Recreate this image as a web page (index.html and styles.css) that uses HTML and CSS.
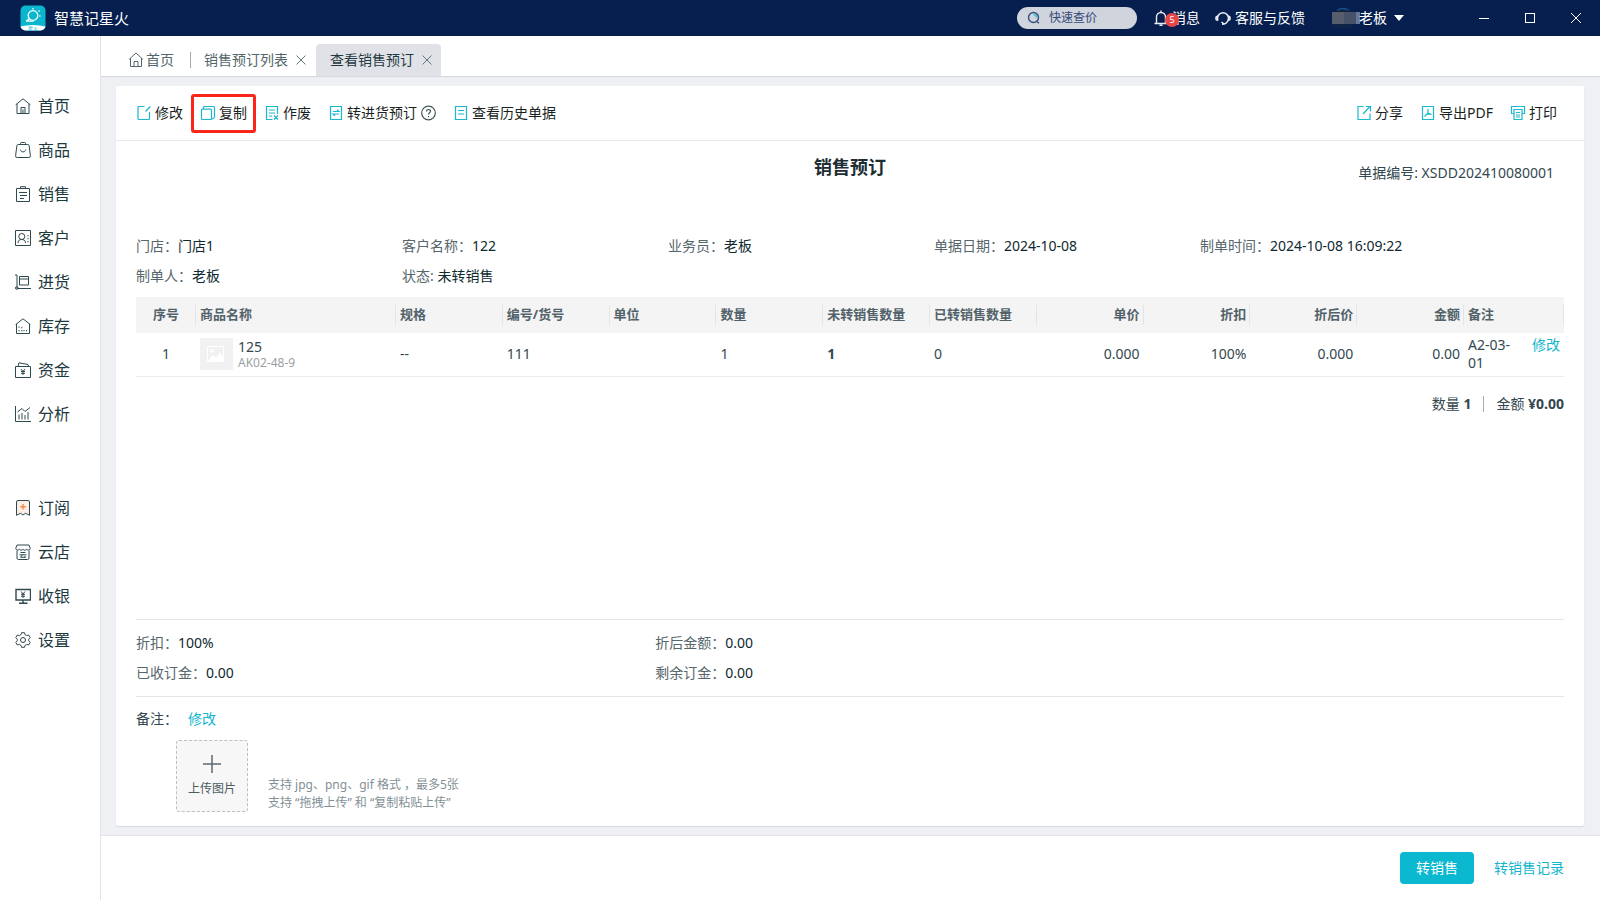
FILE: index.html
```html
<!DOCTYPE html>
<html lang="zh-CN">
<head>
<meta charset="utf-8">
<title>智慧记星火</title>
<link rel="stylesheet" href="styles.css">
</head>
<body>
<header class="topbar">
  <div class="brand">
    <svg class="logo" viewBox="0 0 26 26" width="26" height="26"><defs><clipPath id="lc"><rect x="0.5" y="0.5" width="25" height="25" rx="5"/></clipPath></defs><g clip-path="url(#lc)"><rect width="26" height="26" fill="#0ab6ce"/><path d="M0 21.5Q13 18.500 26 21.500V26H0z" fill="#fff"/></g><circle cx="13" cy="10.500" r="4.800" fill="none" stroke="#fff" stroke-width="1.300"/><path d="M13 3v1.500M19.500 5.500l-1 1M20.500 11h-1.200M9.500 14l-3 1.500M6 16.200h7.500" stroke="#fff" stroke-width="1.300" fill="none"/><text x="13" y="25" text-anchor="middle" class="logo-text">星火</text></svg>
    <span class="brand-name">智慧记星火</span>
  </div>
  <label class="search">
    <svg viewBox="0 0 14 14" width="14" height="14" fill="none" stroke="#33527f" stroke-width="1.400"><circle cx="6.500" cy="6.500" r="5"/><path d="M9.500 10.200l2.500 2"/><path d="M6.500 3.500a3 3 0 0 1 3 3" stroke="#2cc3d8"/></svg>
    <input class="search-input" type="text" placeholder="快速查价" aria-label="快速查价">
  </label>
  <button class="top-btn messages"><svg viewBox="0 0 14 16" width="14" height="16" fill="none" stroke="#e8ecf3" stroke-width="1.400"><path d="M.5 13.500h13M2.500 13.500V7a4.500 4.500 0 0 1 9 0v6.500M7 2.500V.5M5.500 15.300h3"/></svg><span class="msg-label">消息</span><span class="badge">5</span></button>
  <button class="top-btn support"><svg viewBox="0 0 16 16" width="16" height="16" fill="none" stroke="#e8ecf3" stroke-width="1.500"><path d="M3 10.500A5.500 5.500 0 1 1 13 10.500C12 13 10 14.300 7 14.300M6.500 12l3 2.300M2.700 6Q.8 6.500.8 8.300T2.700 10.500M13.300 6q1.900.5 1.900 2.300T13.300 10.500"/></svg><span>客服与反馈</span></button>
  <button class="top-btn account"><svg viewBox="0 0 28 24" width="28" height="24"><path d="M5 4.500Q11 .5 17 4.500" stroke="#0c5593" stroke-width="1.500" fill="none"/><rect x="7" y="4" width="9" height="2" fill="#1c2430"/><rect y="18" width="20" height="4" fill="#0d2347"/><rect y="6" width="12" height="12" fill="#565d6c"/><rect x="12" y="6" width="12" height="12" fill="#475168"/><rect x="24" y="6" width="4" height="12" fill="#66779a"/></svg><span>老板</span><svg class="caret" viewBox="0 0 10 6" width="10" height="6"><path d="M0 0h10L5 6z" fill="#fff"/></svg></button>
  <div class="win-controls">
    <button class="win" aria-label="最小化"><svg viewBox="0 0 12 12" width="12" height="12" stroke="#fff"><path d="M1 6.500h10"/></svg></button>
    <button class="win" aria-label="最大化"><svg viewBox="0 0 12 12" width="12" height="12" stroke="#fff" fill="none"><rect x="1.500" y="1.500" width="9" height="9"/></svg></button>
    <button class="win" aria-label="关闭"><svg viewBox="0 0 12 12" width="12" height="12" stroke="#fff"><path d="M1 1l10 10M11 1L1 11"/></svg></button>
  </div>
</header>
<div class="shell">
  <nav class="sidebar">
    <a class="nav-item" href="#"><svg class="ico" viewBox="0 0 16 16"><path d="M.7 6.800L8 .8l7.300 6M2 5.800v9.700h12V5.800M6 15.500V9.500h4v6M8 11.500v4"/></svg>首页</a>
    <a class="nav-item" href="#"><svg class="ico" viewBox="0 0 16 16"><path d="M3.200 2.500h9.600a1.300 1.300 0 0 1 1.300 1.100l1.300 10a1.600 1.600 0 0 1-1.600 1.900H2.200a1.600 1.600 0 0 1-1.600-1.900l1.300-10a1.300 1.300 0 0 1 1.300-1.100zM5.500 2.500V1.500a1 1 0 0 1 1-1h3a1 1 0 0 1 1 1v1M5.200 7.500c.7 3.200 4.900 3.200 5.600 0"/></svg>商品</a>
    <a class="nav-item" href="#"><svg class="ico" viewBox="0 0 16 16"><path d="M1.500 2.500h13v13h-13zM5.500 2.500V.7h5v1.800M4 6.500h8M5 9.500h7M5 12.500h4"/></svg>销售</a>
    <a class="nav-item" href="#"><svg class="ico" viewBox="0 0 16 16"><path d="M.5.500h15v15H.5zM3 13c0-3 2-3.500 3.700-3.500S10.500 10 10.500 13M13 5v1.300M13 8v1.300M13 11v1.300"/><circle cx="6.800" cy="6.500" r="3"/></svg>客户</a>
    <a class="nav-item" href="#"><svg class="ico" viewBox="0 0 16 16"><path d="M0 1h2v13.500h14M4.500 2.500h9v8.500h-9zM4.500 5h9"/><circle cx="1.800" cy="14" r="1.300"/></svg>进货</a>
    <a class="nav-item" href="#"><svg class="ico" viewBox="0 0 16 16"><path d="M.7 6.500L8 .8l7.300 5.700M1.500 6v9.500h13V6M4 8.500v1.300M4 12v1.300M6.800 12v1.300M9 12v1.300M6.800 9v1.300M11.500 12v1.300"/></svg>库存</a>
    <a class="nav-item" href="#"><svg class="ico" viewBox="0 0 16 16"><path d="M.5 4.500h15v11H.5zM3 4.500l1-3.700 9 1.700.5 2M6 7l2 2.500L10 7M8 9.500V13M6 9.500h4M6 11.300h4"/></svg>资金</a>
    <a class="nav-item" href="#"><svg class="ico" viewBox="0 0 16 16"><path d="M.5 0v15.500H16M4 13.500V8.500M7 13.500V7M10 13.500V9M13 13.500V6M2.500 6L7 2.500l3 3L15 1.500"/></svg>分析</a>
    <div class="nav-gap"></div>
    <a class="nav-item" href="#"><svg class="ico" viewBox="0 0 16 16"><path d="M3 .5h10A1.500 1.500 0 0 1 14.500 2v13.300l-4-2L8 15l-2.500-1.700-4 2V2A1.500 1.500 0 0 1 3 .5z" fill="#fdeee6"/><path class="orange" d="M8 4v5.600M5.200 6.800h5.600"/></svg>订阅</a>
    <a class="nav-item" href="#"><svg class="ico" viewBox="0 0 16 16"><path d="M2 1h12l1.300 3.500a2 2 0 0 1-3.600.7 2.200 2.200 0 0 1-3.700 0 2.200 2.200 0 0 1-3.700 0 2 2 0 0 1-3.600-.7zM2 6.500v7.500a1.500 1.500 0 0 0 1.500 1.500h9A1.500 1.500 0 0 0 14 14V6.500M5.500 8.500h5M4.500 10.800h7M7.500 10.800L5.500 13.300h5M9.500 12l1.300 1.500"/></svg>云店</a>
    <a class="nav-item" href="#"><svg class="ico" viewBox="0 0 16 16"><path class="bold" d="M1 1.500h14.500v10.500H1zM8 12v3M4 15.200h8.500"/><path d="M6 3.500L8 6l2-2.500M8 6v4M6 6.300h4M6 8.200h4"/></svg>收银</a>
    <a class="nav-item" href="#"><svg class="ico" viewBox="0 0 16 16"><path d="M6.500.7h3l.6 2 1.500.9 2.100-.6 1.500 2.600-1.500 1.600v1.600l1.500 1.600-1.500 2.600-2.100-.6-1.500.9-.6 2h-3l-.6-2-1.500-.9-2.100.6L.8 10.400l1.500-1.600V7.200L.8 5.600 2.300 3l2.100.6 1.500-.9z"/><circle cx="8" cy="8" r="2.500"/></svg>设置</a>
  </nav>
  <div class="workspace">
    <div class="tabs">
      <a class="tab tab-home" href="#"><svg viewBox="0 0 16 16" class="ico ico-tab"><path d="M1.200 7.300L8 1l6.800 6.300M2.500 6.300v8.200h11V6.300M6 14.500V9.500h4v5"/></svg>首页</a>
      <div class="tab tab-list">销售预订列表<button class="close" aria-label="关闭"><svg viewBox="0 0 10 10" width="10" height="10"><path d="M.5.500l9 9M9.500.500l-9 9"/></svg></button></div>
      <div class="tab tab-active">查看销售预订<button class="close" aria-label="关闭"><svg viewBox="0 0 10 10" width="10" height="10"><path d="M.5.500l9 9M9.500.500l-9 9"/></svg></button></div>
    </div>
    <main class="content">
      <section class="card">
        <div class="toolbar">
          <button class="tool"><svg class="tico" viewBox="0 0 16 16"><path d="M8.500 1.500H3A1 1 0 0 0 2 2.500v11a1 1 0 0 0 1 1h9.500a1 1 0 0 0 1-1V7"/><path d="M9.500 6.500L14.300 1.500"/></svg>修改</button>
          <button class="tool marked"><svg class="tico" viewBox="0 0 16 16"><path d="M2.500 4.200h8a1 1 0 0 1 1 1v8.300a1 1 0 0 1-1 1h-8a1 1 0 0 1-1-1V5.200a1 1 0 0 1 1-1z"/><path d="M3.500 1.500h10a1 1 0 0 1 1 1v10"/><path d="M3.500 1.500v2.500M11.500 14.200l3-1.700"/></svg>复制</button>
          <button class="tool"><svg class="tico" viewBox="0 0 16 16"><path d="M8.500 14.500h-6v-13h11V9"/><path d="M5 5h6M5 8h6M5 11h3M10 10.500l4 4M14 10.500l-4 4"/></svg>作废</button>
          <button class="tool"><svg class="tico" viewBox="0 0 16 16"><path d="M2.500 1.500h11v13h-11z"/><path d="M5 6.500h6L9 4.700M11 9H5l2 1.800"/></svg>转进货预订<svg class="help" viewBox="0 0 16 16" width="16" height="16"><circle cx="8.500" cy="8" r="6.800"/><path d="M6.500 6.500c0-2.800 4.200-2.500 4 0-.1 1.300-2 1.300-2 3M8.500 11v1.300"/></svg></button>
          <button class="tool"><svg class="tico" viewBox="0 0 16 16"><path d="M2.500 1.500h11v13h-11z"/><path d="M5 5.500h6M5 9h6"/></svg>查看历史单据</button>
          <div class="tools-right">
            <button class="tool"><svg class="tico" viewBox="0 0 16 16"><path d="M7.500 1.500H2v13h12V8.500"/><path d="M7 9l7-7.500M10 1.500h4.500v5"/></svg>分享</button>
            <button class="tool"><svg class="tico" viewBox="0 0 16 16"><path d="M2.500 1.500h11v13h-11z"/><path d="M8 4v4L4.500 11.500M8 8l3.500 1.500M4.500 11.500c1-2.500 5-2.800 7-2"/></svg>导出PDF</button>
            <button class="tool"><svg class="tico" viewBox="0 0 16 16"><path d="M4 8.500H1.500v-7h13v7H12M4 4.500h8v10H4z"/><path d="M6 7.500h4M6 10h4M6 12h4"/></svg>打印</button>
          </div>
        </div>
        <div class="doc-head">
          <h1 class="doc-title">销售预订</h1>
          <p class="doc-no">单据编号: XSDD202410080001</p>
        </div>
        <dl class="info">
          <div class="field"><dt>门店：</dt><dd>门店1</dd></div>
          <div class="field"><dt>客户名称：</dt><dd>122</dd></div>
          <div class="field"><dt>业务员：</dt><dd>老板</dd></div>
          <div class="field"><dt>单据日期：</dt><dd>2024-10-08</dd></div>
          <div class="field"><dt>制单时间：</dt><dd>2024-10-08 16:09:22</dd></div>
          <div class="field"><dt>制单人：</dt><dd>老板</dd></div>
          <div class="field"><dt>状态:&nbsp;</dt><dd>未转销售</dd></div>
        </dl>
        <div class="goods">
          <table class="grid">
            <colgroup><col class="c-no"><col class="c-name"><col span="10"><col class="c-note"></colgroup>
            <thead><tr><th class="mid">序号</th><th>商品名称</th><th>规格</th><th>编号/货号</th><th>单位</th><th>数量</th><th>未转销售数量</th><th>已转销售数量</th><th class="num">单价</th><th class="num">折扣</th><th class="num">折后价</th><th class="num">金额</th><th>备注</th></tr></thead>
            <tbody><tr>
              <td class="mid">1</td>
              <td><div class="product"><svg class="thumb" viewBox="0 0 33 32" width="33" height="32"><rect width="33" height="32" fill="#f1f1f1"/><path d="M7.500 8.500h16v15h-16z" fill="none" stroke="#fff"/><circle cx="12" cy="13" r="1.800" fill="#fff"/><path d="M8 23l5-6 3 3 4-6 4 7v2z" fill="#fff"/></svg><div class="product-text"><div class="pname">125</div><div class="pcode">AK02-48-9</div></div></div></td>
              <td>--</td><td>111</td><td></td><td>1</td><td class="strong">1</td><td>0</td>
              <td class="num">0.000</td><td class="num">100%</td><td class="num">0.000</td><td class="num">0.00</td>
              <td><div class="note"><span class="note-text">A2-03-01</span><a class="link" href="#">修改</a></div></td>
            </tr></tbody>
          </table>
          <div class="totals"><span>数量 <b>1</b></span><span class="total-amount">金额 <b>¥0.00</b></span></div>
        </div>
        <dl class="summary">
          <div class="field"><dt>折扣：</dt><dd>100%</dd></div>
          <div class="field"><dt>折后金额：</dt><dd>0.00</dd></div>
          <div class="field"><dt>已收订金：</dt><dd>0.00</dd></div>
          <div class="field"><dt>剩余订金：</dt><dd>0.00</dd></div>
        </dl>
        <div class="remark">
          <div class="remark-line"><span>备注：</span><a class="link" href="#">修改</a></div>
          <div class="upload-row">
            <button class="upload"><svg viewBox="0 0 18 18" width="18" height="18"><path d="M9 0v18M0 9h18" stroke="#5b6b70" stroke-width="1.500"/></svg>上传图片</button>
            <p class="hint">支持 jpg、png、gif 格式 ，最多5张<br>支持 “拖拽上传” 和 “复制粘贴上传”</p>
          </div>
        </div>
      </section>
    </main>
    <footer class="actions">
      <button class="primary">转销售</button>
      <a class="link" href="#">转销售记录</a>
    </footer>
  </div>
</div>
</body>
</html>
```

FILE: styles.css
```css
* { box-sizing: border-box; }
body {
  margin: 0;
  height: 100vh;
  display: flex;
  flex-direction: column;
  font: 14px/20px "Noto Sans", "Noto Sans CJK SC", sans-serif;
  color: #33474f;
  background: #fff;
}
button { margin: 0; padding: 0; border: 0; background: none; font: inherit; color: inherit; cursor: pointer; }
a { color: inherit; text-decoration: none; }
h1, p, dl, dd { margin: 0; }
svg { flex: none; }
.link { color: #12b5ce; }

.topbar { flex: none; height: 36px; display: flex; align-items: center; padding: 0 18px 0 20px; background: #061f4f; color: #fff; }
.brand { display: flex; align-items: center; gap: 8px; margin-right: auto; }
.brand-name { font-size: 15px; }
.logo-text { font-size: 5px; fill: #0ab6ce; }
.search { display: flex; align-items: center; gap: 8px; width: 120px; height: 22px; padding: 0 10px; border-radius: 11px; background: #d0d4dc; }
.search-input { width: 100%; min-width: 0; border: 0; padding: 0; outline: 0; background: none; font: inherit; font-size: 12px; }
.search-input::placeholder { color: #34497a; opacity: 1; }
.top-btn { position: relative; display: flex; align-items: center; color: #fff; }
.messages { margin-left: 17px; gap: 4px; }
.badge { position: absolute; left: 11px; top: 5px; width: 14px; height: 14px; border-radius: 7px; background: #e84749; font-size: 9px; line-height: 14px; text-align: center; }
.support { margin-left: 15px; gap: 4px; }
.account { margin-left: 27px; }
.account svg { margin-right: -1px; }
.account .caret { margin: 0 0 0 7px; }
.win-controls { display: flex; gap: 34px; margin-left: 74px; }
.win { display: flex; width: 12px; height: 12px; }

.shell { flex: 1; min-height: 0; display: flex; }
.sidebar { flex: none; width: 101px; padding: 48px 0 0 15px; border-right: 1px solid #dfe2e8; background: #fff; }
.nav-item { display: flex; align-items: center; gap: 7px; height: 44px; font-size: 16px; color: #1d3940; }
.nav-gap { height: 50px; }
.ico { width: 16px; height: 16px; fill: none; stroke: #2f4950; stroke-width: 1; }
.bold { stroke-width: 1.400; }
.orange { stroke: #f08a4b; stroke-width: 1.400; }

.workspace { flex: 1; min-width: 0; display: flex; flex-direction: column; background: #eff0f4; }
.tabs { flex: none; display: flex; align-items: flex-end; height: 40px; padding-left: 27px; background: #fff; box-shadow: 0 1px 1px #d9dbe2; }
.tab { position: relative; display: flex; align-items: center; height: 32px; color: #52666c; }
.ico-tab { margin-right: 2px; stroke: #52666c; }
.tab-list { padding: 0 10px 0 30px; }
.tab-list::before { content: ""; position: absolute; left: 16px; top: 8px; width: 1px; height: 16px; background: #a5adb3; }
.tab-active { padding: 0 9px 0 14px; border-radius: 4px 4px 0 0; background: #e1e2e7; color: #1f3940; }
.close { display: flex; margin-left: 8px; }
.close path { stroke: #66777c; fill: none; }

.content { flex: 1; min-height: 0; padding: 10px 16px 9px 15px; display: flex; }
.card { flex: 1; min-width: 0; display: flex; flex-direction: column; border-radius: 2px; background: #fff; box-shadow: 0 1px 1px #d5d7df; }
.toolbar { display: flex; align-items: center; gap: 17px; height: 55px; padding: 0 27px 0 20px; border-bottom: 1px solid #e8e9eb; color: #1a1f22; }
.tool { position: relative; display: flex; align-items: center; gap: 3px; }
.tools-right { display: flex; gap: 17px; margin-left: auto; }
.tico { width: 16px; height: 16px; fill: none; stroke: #1cb8ce; stroke-width: 1.200; }
.help { fill: none; stroke: #44565c; stroke-width: 1.200; }
.marked::after { content: ""; position: absolute; inset: -9px -9px -10px -9px; border: 3px solid #fb2619; border-radius: 3px; }
.doc-head { position: relative; height: 90px; padding-top: 14px; text-align: center; }
.doc-title { font-size: 18px; line-height: 24px; color: #1c2d33; }
.doc-no { position: absolute; right: 30px; top: 22px; }
.field { display: flex; }
.field dt { color: #56666b; }
.field dd { color: #10292f; }
.info { display: grid; grid-template-columns: repeat(5, 266fr) 98fr; row-gap: 10px; padding: 5px 20px 11px; }
.info .field:nth-child(6) { grid-column: 1; }

.goods { flex: 1; padding: 0 20px; }
.grid { width: 100%; table-layout: fixed; border-collapse: collapse; line-height: 18px; }
.c-no { width: 60px; }
.c-name { width: 200px; }
.c-note { width: 100px; }
.grid th { height: 36px; padding: 0 4px 3px; text-align: left; font-size: 13px; color: #52626a; background: linear-gradient(#e2e4e6, #e2e4e6) right center / 1px 20px no-repeat #f4f4f4; }
.grid td { height: 43px; padding: 0 4px; border-bottom: 1px solid #ececee; }
.grid .mid { text-align: center; }
.grid .num { text-align: right; }
.strong { font-weight: 700; }
.product { display: flex; gap: 5px; }
.product-text { line-height: 17px; }
.pcode { font-size: 12px; line-height: 16px; color: #9a9fa2; }
.note { display: flex; justify-content: space-between; }
.note-text { width: 50px; }
.totals { display: flex; justify-content: flex-end; margin-top: 17px; }
.total-amount { position: relative; margin-left: 25px; }
.total-amount::before { content: ""; position: absolute; left: -13px; top: 2px; width: 1px; height: 16px; background: #a5adb3; }

.summary { display: grid; grid-template-columns: 4fr 7fr; row-gap: 10px; margin: 0 20px; padding: 13px 0 13px; border: solid #e3e5e7; border-width: 1px 0; }
.remark { padding: 12px 20px 14px; }
.remark-line { display: flex; gap: 10px; }
.upload-row { display: flex; align-items: flex-end; gap: 20px; margin: 11px 0 0 40px; }
.upload { display: flex; flex-direction: column; align-items: center; justify-content: center; gap: 7px; width: 72px; height: 72px; border: 1px dashed #bcc0c2; border-radius: 3px; background: #f7f7f7; font-size: 12px; line-height: 18px; color: #4c5c61; }
.hint { font-size: 12px; line-height: 18px; color: #839095; }
.actions { flex: none; height: 65px; display: flex; align-items: center; justify-content: flex-end; gap: 20px; padding-right: 36px; background: #fff; border-top: 1px solid #e2e3e7; }
.primary { width: 74px; height: 32px; border-radius: 4px; background: #0ab8d0; color: #fff; }
```
